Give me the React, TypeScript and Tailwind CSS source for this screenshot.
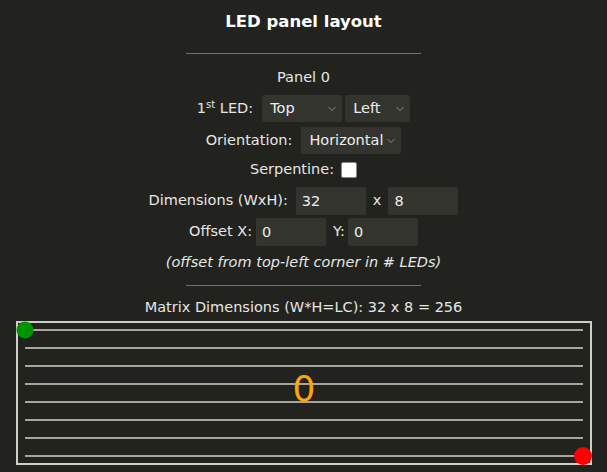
import React from 'react';

const font = { fontFamily: '"DejaVu Sans", Verdana, sans-serif' };

const Chevron = () => (
  <svg width="8" height="5" viewBox="0 0 8 5" className="pointer-events-none absolute right-[6px] top-1/2 -translate-y-1/2">
    <path d="M0.5 0.5 L4 4 L7.5 0.5" fill="none" stroke="#8a8a84" strokeWidth="1" />
  </svg>
);

const Select: React.FC<{ value: string; options: string[]; width: string }> = ({ value, options, width }) => (
  <div className={`relative ${width} h-[27px]`}>
    <select
      defaultValue={value}
      className="h-full w-full appearance-none rounded-[2px] bg-[#33342e] pl-[8px] pr-[16px] text-[14.5px] text-[#eeeeee] outline-none"
      style={font}
    >
      {options.map((o) => (
        <option key={o}>{o}</option>
      ))}
    </select>
    <Chevron />
  </div>
);

const Field: React.FC<{ value: string }> = ({ value }) => (
  <input
    defaultValue={value}
    className="h-[28px] w-[70px] rounded-[2px] bg-[#33342e] px-[6px] text-[14.5px] text-[#eeeeee] outline-none"
    style={font}
  />
);

const Matrix = () => {
  const rows = Array.from({ length: 8 }, (_, i) => 9 + i * 18);
  return (
    <svg width="576" height="144" viewBox="0 0 576 144" className="block">
      <rect x="1" y="1" width="574" height="142" fill="none" stroke="#cfcfc8" strokeWidth="2" />
      {rows.map((y) => (
        <line key={y} x1="9" y1={y} x2="567" y2={y} stroke="#a5a59e" strokeWidth="2" />
      ))}
      <circle cx="9" cy="9" r="8.5" fill="#009400" />
      <circle cx="567" cy="135" r="9" fill="#ff0000" />
      <text x="288" y="80" textAnchor="middle" fontSize="36" fill="#ffa500" style={font}>
        0
      </text>
    </svg>
  );
};

export default function App() {
  return (
    <div className="min-h-screen bg-[#22231e] text-[14.5px] text-[#e6e6e6]" style={font}>
      <div className="flex flex-col items-center pt-[12px]">
        <h3 className="h-[20px] text-[16.5px] font-bold leading-[20px] text-white">LED panel layout</h3>
        <div className="mt-[21px] h-px w-[235px] bg-[#707069]" />
        <div className="mt-[13px] h-[20px] leading-[20px]">Panel 0</div>

        <div className="mt-[8px] flex h-[27px] items-center">
          <span className="mr-[9px]">
            1<sup className="text-[10px]">st</sup> LED:
          </span>
          <Select value="Top" options={['Top', 'Bottom']} width="w-[80px]" />
          <div className="w-[3px]" />
          <Select value="Left" options={['Left', 'Right']} width="w-[65px]" />
        </div>

        <div className="mt-[5px] flex h-[27px] items-center">
          <span className="mr-[9px]">Orientation:</span>
          <Select value="Horizontal" options={['Horizontal', 'Vertical']} width="w-[100px]" />
        </div>

        <div className="mt-[6px] flex h-[20px] items-center">
          <span className="mr-[7px]">Serpentine:</span>
          <input type="checkbox" className="h-[16px] w-[16px] appearance-none rounded-[2px] border border-[#888] bg-white" />
        </div>

        <div className="mt-[7px] flex h-[28px] items-center">
          <span className="mr-[8px]">Dimensions (WxH):</span>
          <Field value="32" />
          <span className="mx-[7px]">x</span>
          <Field value="8" />
        </div>

        <div className="mt-[3px] flex h-[28px] items-center">
          <span className="mr-[4px]">Offset X:</span>
          <Field value="0" />
          <span className="ml-[7px] mr-[3px]">Y:</span>
          <Field value="0" />
        </div>

        <div className="mt-[6px] h-[20px] italic leading-[20px]">(offset from top-left corner in # LEDs)</div>
        <div className="mt-[13px] h-px w-[235px] bg-[#707069]" />
        <div className="mt-[11px] h-[20px] leading-[20px]">Matrix Dimensions (W*H=LC): 32 x 8 = 256</div>
        <div className="mt-[4px]">
          <Matrix />
        </div>
      </div>
    </div>
  );
}
